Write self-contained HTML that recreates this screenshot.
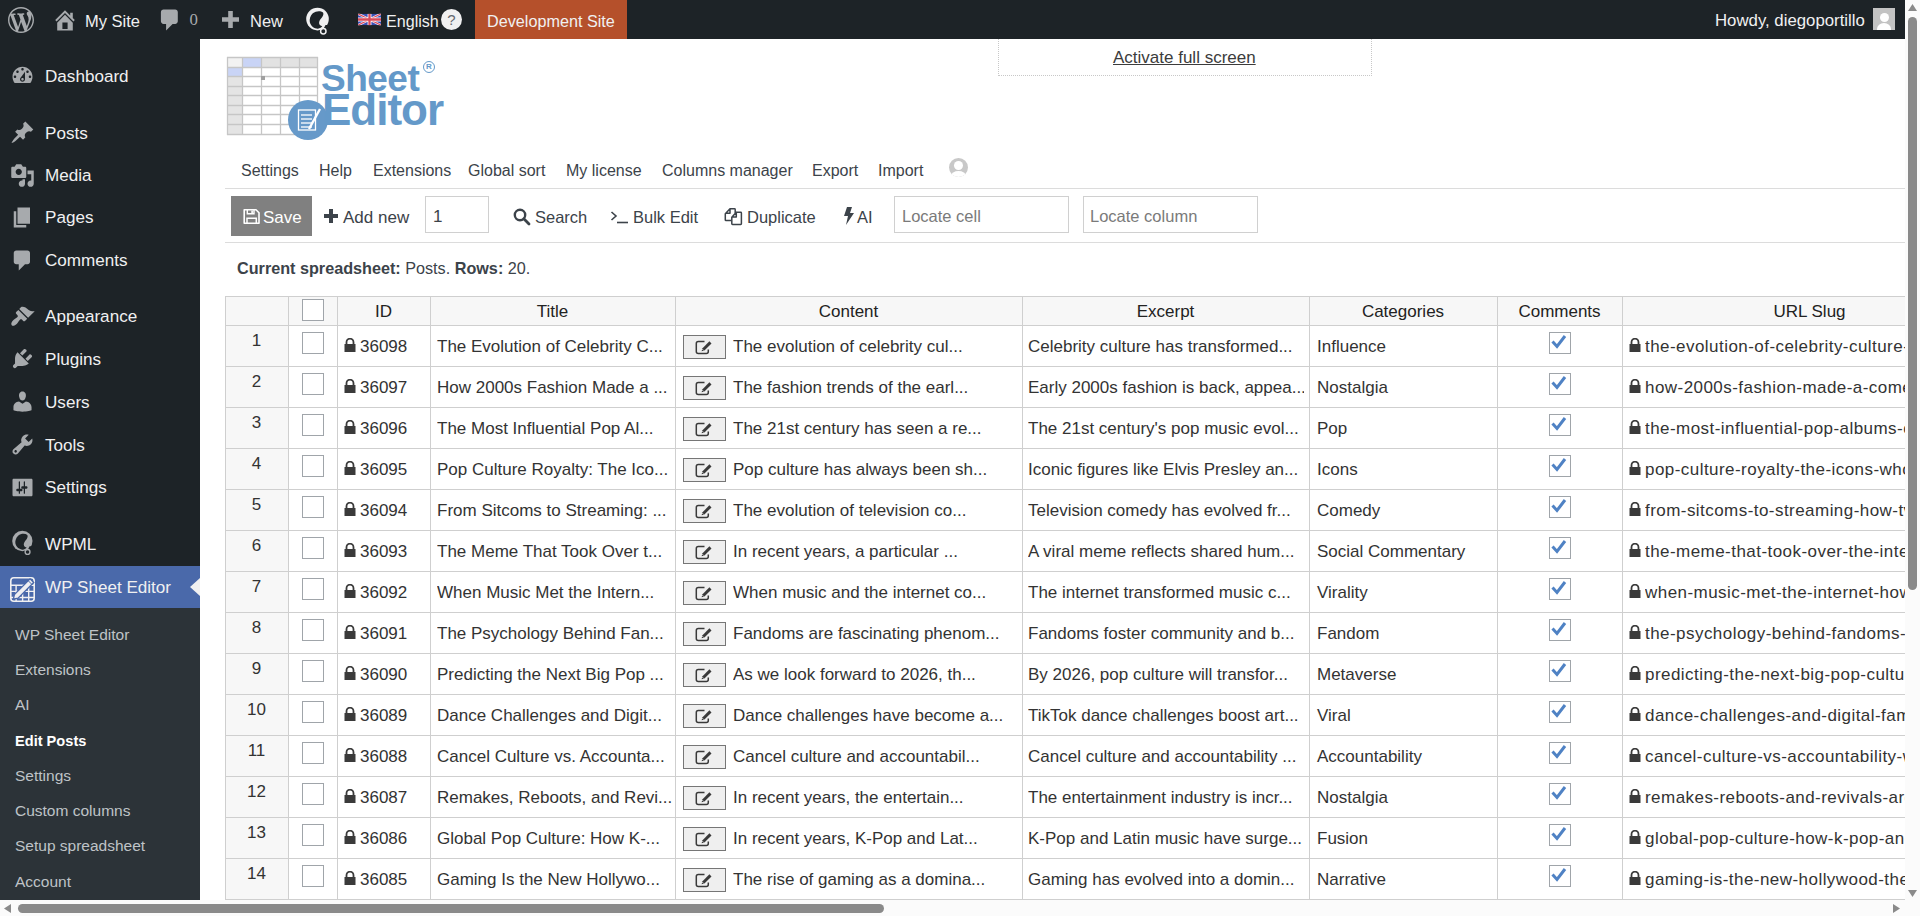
<!DOCTYPE html>
<html><head><meta charset="utf-8"><style>
html,body{margin:0;padding:0;width:1920px;height:916px;overflow:hidden;background:#fff;}
body{position:relative;font-family:"Liberation Sans", sans-serif;}
.f{font-family:"Liberation Sans", sans-serif;}
.t{position:absolute;white-space:nowrap;font-family:"Liberation Sans", sans-serif;}
</style></head><body>
<div style="position:absolute;left:0px;top:0px;width:1905px;height:39px;background:#1d2327"></div>
<svg style="position:absolute;left:8.3px;top:6.5px" width="26" height="26" viewBox="0 0 20 20"><path fill="#a7aaad" d="M20 10c0-5.51-4.49-10-10-10C4.48 0 0 4.49 0 10c0 5.52 4.48 10 10 10 5.51 0 10-4.48 10-10zM7.78 15.37L4.37 6.22c.55-.02 1.17-.08 1.17-.08.5-.06.44-1.13-.06-1.11 0 0-1.45.11-2.37.11-.18 0-.37 0-.58-.01C4.12 2.69 6.87 1.11 10 1.11c2.33 0 4.45.87 6.05 2.34-.68-.11-1.65.39-1.65 1.58 0 .74.45 1.36.9 2.1.35.61.55 1.36.55 2.46 0 1.49-1.4 5-1.4 5l-3.03-8.37c.54-.02.82-.17.82-.17.5-.05.44-1.25-.06-1.22 0 0-1.44.12-2.38.12-.87 0-2.33-.12-2.33-.12-.5-.03-.56 1.2-.06 1.22l.92.08 1.26 3.41zM17.41 10c.24-.64.74-1.87.43-4.25.7 1.29 1.05 2.71 1.05 4.25 0 3.29-1.73 6.24-4.4 7.78.97-2.59 1.94-5.2 2.92-7.78zM6.1 18.09C3.12 16.65 1.11 13.53 1.11 10c0-1.3.23-2.48.72-3.59 1.42 3.89 2.84 7.79 4.27 11.68zm4.03-6.63l2.58 6.98c-.86.29-1.76.45-2.71.45-.79 0-1.57-.11-2.29-.33.81-2.38 1.62-4.74 2.42-7.1z"/></svg>
<svg style="position:absolute;left:52px;top:7px" width="26" height="26" viewBox="0 0 20 20"><path fill="#a7aaad" d="M16 8.5l1.53 1.53-1.06 1.06L10 4.62l-6.47 6.47-1.06-1.06L10 2.5l4 4v-2h2v4zm-6-2.46l6 5.99V18H4v-5.97zM12 17v-5H8v5h4z"/></svg>
<div class="t" style="left:85px;top:13.03px;font-size:16.5px;line-height:16.5px;font-weight:400;color:#f0f0f1;">My Site</div>
<svg style="position:absolute;left:156.8px;top:7.3px" width="26" height="26" viewBox="0 0 20 20"><path fill="#a7aaad" d="M5 2h9c1.1 0 2 .9 2 2v7c0 1.1-.9 2-2 2h-2l-5 5v-5H5c-1.1 0-2-.9-2-2V4c0-1.1.9-2 2-2z"/></svg>
<div class="t" style="left:189.5px;top:12.08px;font-size:16.8px;line-height:16.8px;font-weight:400;color:#a7aaad;font-family:'Liberation Serif',serif">0</div>
<svg style="position:absolute;left:222px;top:11px" width="17" height="17" viewBox="0 0 17 17"><path fill="#a7aaad" d="M6.2 0H10.8V6.2H17V10.8H10.8V17H6.2V10.8H0V6.2H6.2Z"/></svg>
<div class="t" style="left:250px;top:13.03px;font-size:16.5px;line-height:16.5px;font-weight:400;color:#f0f0f1;">New</div>
<svg style="position:absolute;left:306px;top:7.7px;overflow:visible" width="24.0" height="27.0" viewBox="0 0 24 27"><circle cx="11.5" cy="11.1" r="11.3" fill="#f0f0f1"/><path fill="#1d2327" d="M17.1 4.4 C14.5 2.5 10 2.7 6.8 5.2 C4.2 7.6 3.3 11.5 3.8 14 C4.7 18.2 8.5 20.8 12 20.7 C13.5 20.3 15 20 16.3 18.3 C13.5 17.8 12.6 15.5 13.3 13.5 C13.8 11.8 15.3 10.5 16.4 8.8 C17.5 7 17.6 5.5 17.1 4.65Z"/><path fill="#1d2327" d="M19.5 17 L23.5 17 L23.5 22 L17 22Z"/><circle cx="17.3" cy="23.3" r="2.7" fill="none" stroke="#f0f0f1" stroke-width="1.5"/></svg>
<svg style="position:absolute;left:358px;top:12px" width="23" height="15" viewBox="0 0 60 30"><clipPath id="fc"><path d="M0 0v30h60V0z"/></clipPath><g clip-path="url(#fc)"><path d="M0 0v30h60V0z" fill="#3a4fb4"/><path d="M0 0l60 30m0-30L0 30" stroke="#fff" stroke-width="6"/><path d="M0 0l60 30m0-30L0 30" stroke="#d94a5a" stroke-width="3"/><path d="M30 0v30M0 15h60" stroke="#fff" stroke-width="10"/><path d="M30 0v30M0 15h60" stroke="#d94a5a" stroke-width="6"/></g></svg>
<div class="t" style="left:386px;top:13.37px;font-size:16.1px;line-height:16.1px;font-weight:400;color:#f0f0f1;">English</div>
<div style="position:absolute;left:441px;top:9px;width:21px;height:21px;border-radius:50%;background:#f0f0f1;color:#646970;font-size:15px;line-height:21px;font-weight:400;text-align:center" class="f">?</div>
<div style="position:absolute;left:475px;top:0px;width:152px;height:39px;background:#b5502b"></div>
<div class="t" style="left:487px;top:13.29px;font-size:16.2px;line-height:16.2px;font-weight:400;color:#f0f0f1;">Development Site</div>
<div class="t" style="left:1715px;top:12.78px;font-size:16.8px;line-height:16.8px;font-weight:400;color:#f0f0f1;">Howdy, diegoportillo</div>
<div style="position:absolute;left:1873px;top:8px;width:22px;height:22px;background:#c3c3c3;overflow:hidden"><div style="position:absolute;left:7px;top:5px;width:9px;height:9px;border-radius:50%;background:#fff"></div><div style="position:absolute;left:4px;top:15px;width:14px;height:12px;border-radius:50% 50% 0 0;background:#fff"></div></div>
<div style="position:absolute;left:0px;top:39px;width:200px;height:861px;background:#1d2327"></div>
<div style="position:absolute;left:0px;top:608px;width:200px;height:292px;background:#2c3338"></div>
<div style="position:absolute;left:0px;top:566px;width:200px;height:42px;background:#4a69aa"></div>
<svg style="position:absolute;left:190px;top:578px" width="10" height="18" viewBox="0 0 10 18"><path d="M10 0 L0 9 L10 18Z" fill="#f0f0f1"/></svg>
<div class="t" style="left:45px;top:67.52px;font-size:17.1px;line-height:17.1px;font-weight:400;color:#f0f0f1;">Dashboard</div>
<div class="t" style="left:45px;top:124.52px;font-size:17.1px;line-height:17.1px;font-weight:400;color:#f0f0f1;">Posts</div>
<div class="t" style="left:45px;top:167.02px;font-size:17.1px;line-height:17.1px;font-weight:400;color:#f0f0f1;">Media</div>
<div class="t" style="left:45px;top:209.02px;font-size:17.1px;line-height:17.1px;font-weight:400;color:#f0f0f1;">Pages</div>
<div class="t" style="left:45px;top:252.02px;font-size:17.1px;line-height:17.1px;font-weight:400;color:#f0f0f1;">Comments</div>
<div class="t" style="left:45px;top:308.02px;font-size:17.1px;line-height:17.1px;font-weight:400;color:#f0f0f1;">Appearance</div>
<div class="t" style="left:45px;top:350.82px;font-size:17.1px;line-height:17.1px;font-weight:400;color:#f0f0f1;">Plugins</div>
<div class="t" style="left:45px;top:393.82px;font-size:17.1px;line-height:17.1px;font-weight:400;color:#f0f0f1;">Users</div>
<div class="t" style="left:45px;top:436.52px;font-size:17.1px;line-height:17.1px;font-weight:400;color:#f0f0f1;">Tools</div>
<div class="t" style="left:45px;top:479.32px;font-size:17.1px;line-height:17.1px;font-weight:400;color:#f0f0f1;">Settings</div>
<div class="t" style="left:45px;top:536.32px;font-size:17.1px;line-height:17.1px;font-weight:400;color:#f0f0f1;">WPML</div>
<div class="t" style="left:45px;top:579.02px;font-size:17.1px;line-height:17.1px;font-weight:400;color:#f0f0f1;">WP Sheet Editor</div>
<svg style="position:absolute;left:9.5px;top:63.0px" width="25" height="25" viewBox="0 0 20 20"><path fill="#a7aaad" fill-rule="evenodd" d="M3.76 16h12.48c1.1-1.37 1.76-3.11 1.76-5 0-4.42-3.58-8-8-8s-8 3.58-8 8c0 1.89.66 3.63 1.76 5zM10 4c.55 0 1 .45 1 1s-.45 1-1 1-1-.45-1-1 .45-1 1-1zM6 6c.55 0 1 .45 1 1s-.45 1-1 1-1-.45-1-1 .45-1 1-1zm8 0c.55 0 1 .45 1 1s-.45 1-1 1-1-.45-1-1 .45-1 1-1zm-5.37 5.55L12 7v6c0 1.1-.9 2-2 2s-2-.9-2-2c0-.57.24-1.08.63-1.45zM4 10c.55 0 1 .45 1 1s-.45 1-1 1-1-.45-1-1 .45-1 1-1zm12 0c.55 0 1 .45 1 1s-.45 1-1 1-1-.45-1-1 .45-1 1-1zm-5 3c0-.55-.45-1-1-1s-1 .45-1 1 .45 1 1 1 1-.45 1-1z"/></svg>
<svg style="position:absolute;left:9.5px;top:120.0px" width="25" height="25" viewBox="0 0 20 20"><path fill="#a7aaad" fill-rule="evenodd" d="M10.44 3.02l1.82-1.82 6.36 6.35-1.83 1.82c-1.05-.68-2.48-.57-3.41.36l-.75.75c-.92.93-1.04 2.35-.35 3.41l-1.830 1.82-2.41-2.41-2.8 2.79c-.42.42-3.38 2.71-3.8 2.29s1.86-3.39 2.28-3.810l2.79-2.79L4.1 9.36l1.83-1.82c1.05.69 2.48.57 3.4-.36l.75-.75c.93-.92 1.05-2.35.36-3.41z"/></svg>
<svg style="position:absolute;left:9.5px;top:162.5px" width="25" height="25" viewBox="0 0 20 20"><path fill="#a7aaad" fill-rule="evenodd" d="M13 11V4c0-.55-.45-1-1-1h-1.67L9 1H5L3.67 3H2c-.55 0-1 .45-1 1v7c0 .55.45 1 1 1h10c.55 0 1-.45 1-1zM7 4.5c1.38 0 2.5 1.12 2.5 2.5S8.38 9.5 7 9.5 4.5 8.38 4.5 7 5.62 4.5 7 4.5zM14 6h5v10.5c0 1.38-1.12 2.5-2.5 2.5S14 17.88 14 16.5s1.12-2.5 2.5-2.5c.17 0 .34.02.5.05V9h-3V6zm-4 8.05V13h2v3.5c0 1.38-1.12 2.5-2.5 2.5S7 17.88 7 16.5 8.12 14 9.5 14c.17 0 .34.02.5.05z"/></svg>
<svg style="position:absolute;left:9.5px;top:204.5px" width="25" height="25" viewBox="0 0 20 20"><path fill="#a7aaad" fill-rule="evenodd" d="M6 15V2h10v13H6zm-1 1h8v2H3V5h2v11z"/></svg>
<svg style="position:absolute;left:9.5px;top:247.5px" width="25" height="25" viewBox="0 0 20 20"><path fill="#a7aaad" fill-rule="evenodd" d="M5 2h9c1.1 0 2 .9 2 2v7c0 1.1-.9 2-2 2h-2l-5 5v-5H5c-1.1 0-2-.9-2-2V4c0-1.1.9-2 2-2z"/></svg>
<svg style="position:absolute;left:9.5px;top:303.5px" width="25" height="25" viewBox="0 0 20 20"><path fill="#a7aaad" fill-rule="evenodd" d="M14.48 11.06L7.41 3.99l1.5-1.5c.5-.56 2.3-.47 3.51.32 1.21.8 1.43 1.28 2.91 2.1 1.18.64 2.45 1.26 4.45.85zm-.71.71L6.7 4.7 4.93 6.47c-.39.39-.39 1.02 0 1.41l1.06 1.06c.39.39.39 1.03 0 1.42-.6.6-1.430 1.11-2.21 1.69-.35.26-.7.53-1.01.84C1.43 14.23.4 16.08 1.4 17.07c.99 1 2.84-.03 4.18-1.36.31-.31.58-.66.85-1.02.57-.78 1.08-1.61 1.69-2.21.39-.39 1.02-.39 1.41 0l1.06 1.06c.39.39 1.02.39 1.41 0z"/></svg>
<svg style="position:absolute;left:9.5px;top:346.3px" width="25" height="25" viewBox="0 0 20 20"><path fill="#a7aaad" fill-rule="evenodd" d="M13.11 4.36L9.87 7.6 8 5.73l3.24-3.24c.35-.34 1.05-.2 1.56.32.52.51.66 1.21.31 1.55zm-8 1.77l.91-1.12 9.01 9.01-1.19.84c-.71.71-2.63 1.16-3.82 1.16H6.14L4.9 17.26c-.59.59-1.54.59-2.12 0-.59-.58-.59-1.53 0-2.12l1.24-1.24v-3.88c0-1.13.4-3.19 1.09-3.89zm7.26 3.970l3.24-3.24c.34-.35 1.04-.21 1.55.31.52.51.66 1.21.31 1.55l-3.24 3.25z"/></svg>
<svg style="position:absolute;left:9.5px;top:389.3px" width="25" height="25" viewBox="0 0 20 20"><path fill="#a7aaad" fill-rule="evenodd" d="M10 9.25c-2.27 0-2.73-3.44-2.73-3.44C7 4.02 7.82 2 9.97 2c2.16 0 2.98 2.02 2.71 3.81 0 0-.41 3.44-2.68 3.44zm0 2.57L12.72 10c2.39 0 4.52 2.33 4.52 4.53v2.49s-3.65 1.13-7.24 1.13c-3.65 0-7.24-1.130-7.24-1.13v-2.49c0-2.25 1.94-4.48 4.47-4.48z"/></svg>
<svg style="position:absolute;left:9.5px;top:432.0px" width="25" height="25" viewBox="0 0 20 20"><path fill="#a7aaad" fill-rule="evenodd" d="M16.68 9.77c-1.34 1.34-3.3 1.67-4.95.99l-5.41 6.52c-.99.99-2.59.99-3.58 0s-.99-2.59 0-3.57l6.52-5.42c-.68-1.65-.35-3.61.99-4.95 1.28-1.28 3.12-1.62 4.72-1.06l-2.89 2.89 2.82 2.82 2.86-2.87c.53 1.58.18 3.39-1.08 4.65zM3.81 16.21c.4.39 1.04.39 1.430 0 .4-.4.4-1.04 0-1.43-.39-.4-1.03-.4-1.43 0-.39.39-.39 1.03 0 1.43z"/></svg>
<svg style="position:absolute;left:9.5px;top:474.8px" width="25" height="25" viewBox="0 0 20 20"><path fill="#a7aaad" fill-rule="evenodd" d="M18 16V4c0-.55-.45-1-1-1H3c-.55 0-1 .45-1 1v12c0 .55.45 1 1 1h14c.55 0 1-.45 1-1zM8 11h1c.55 0 1 .45 1 1s-.45 1-1 1H8v1.5c0 .28-.22.5-.5.5s-.5-.22-.5-.5V13H6c-.55 0-1-.45-1-1s.45-1 1-1h1V5.5c0-.28.22-.5.5-.5s.5.22.5.5V11zm5-2h-1V5.5c0-.28-.22-.5-.5-.5s-.5.22-.5.5V9h-1c-.55 0-1 .45-1 1s.45 1 1 1h1v3.5c0 .28.22.5.5.5s.5-.22.5-.5V11h1c.55 0 1-.45 1-1s-.45-1-1-1z"/></svg>
<svg style="position:absolute;left:12px;top:531px;overflow:visible" width="21.6" height="24.3" viewBox="0 0 24 27"><circle cx="11.5" cy="11.1" r="11.3" fill="#a7aaad"/><path fill="#1d2327" d="M17.1 4.4 C14.5 2.5 10 2.7 6.8 5.2 C4.2 7.6 3.3 11.5 3.8 14 C4.7 18.2 8.5 20.8 12 20.7 C13.5 20.3 15 20 16.3 18.3 C13.5 17.8 12.6 15.5 13.3 13.5 C13.8 11.8 15.3 10.5 16.4 8.8 C17.5 7 17.6 5.5 17.1 4.65Z"/><path fill="#1d2327" d="M19.5 17 L23.5 17 L23.5 22 L17 22Z"/><circle cx="17.3" cy="23.3" r="2.7" fill="none" stroke="#a7aaad" stroke-width="1.5"/></svg>
<svg style="position:absolute;left:10px;top:577px" width="25" height="25" viewBox="0 0 25 25"><rect x="0.8" y="0.8" width="23.4" height="23.4" rx="3" fill="none" stroke="#f0f0f1" stroke-width="1.6"/><g stroke="#f0f0f1" stroke-width="1.4" fill="none"><path d="M1 8.3H24M1 14.4H24M1 20.5H24M6.1 8.3V24M12.6 8.3V24M18.7 8.3V24"/></g><path d="M3.4 22.2 L8.07 21.21 L23.74 5.54 L20.06 1.86 L4.39 17.53Z" fill="#f0f0f1" stroke="#4a69aa" stroke-width="1.3"/><path d="M18.2 3.7 L21.9 7.4" stroke="#4a69aa" stroke-width="1"/></svg>
<div class="t" style="left:15px;top:626.68px;font-size:15.5px;line-height:15.5px;font-weight:400;color:#bfc3c7;">WP Sheet Editor</div>
<div class="t" style="left:15px;top:661.98px;font-size:15.5px;line-height:15.5px;font-weight:400;color:#bfc3c7;">Extensions</div>
<div class="t" style="left:15px;top:697.28px;font-size:15.5px;line-height:15.5px;font-weight:400;color:#bfc3c7;">AI</div>
<div class="t" style="left:15px;top:734.14px;font-size:14.6px;line-height:14.6px;font-weight:700;color:#ffffff;">Edit Posts</div>
<div class="t" style="left:15px;top:767.88px;font-size:15.5px;line-height:15.5px;font-weight:400;color:#bfc3c7;">Settings</div>
<div class="t" style="left:15px;top:803.18px;font-size:15.5px;line-height:15.5px;font-weight:400;color:#bfc3c7;">Custom columns</div>
<div class="t" style="left:15px;top:838.48px;font-size:15.5px;line-height:15.5px;font-weight:400;color:#bfc3c7;">Setup spreadsheet</div>
<div class="t" style="left:15px;top:873.78px;font-size:15.5px;line-height:15.5px;font-weight:400;color:#bfc3c7;">Account</div>
<div style="position:absolute;left:1905px;top:0px;width:15px;height:916px;background:#fbfbfb"></div>
<div style="position:absolute;left:0px;top:900px;width:1905px;height:16px;background:#fbfbfb"></div>
<div style="position:absolute;left:1908px;top:17px;width:9px;height:573px;background:#8a8a8a;border-radius:5px"></div>
<div style="position:absolute;left:18px;top:904px;width:866px;height:9px;background:#8a8a8a;border-radius:5px"></div>
<svg style="position:absolute;left:1907px;top:3px" width="11" height="9" viewBox="0 0 11 9"><path d="M5.5 1 L10 8 H1Z" fill="#8a8a8a"/></svg>
<svg style="position:absolute;left:1907px;top:889px" width="11" height="9" viewBox="0 0 11 9"><path d="M5.5 8 L10 1 H1Z" fill="#8a8a8a"/></svg>
<svg style="position:absolute;left:3px;top:903px" width="9" height="11" viewBox="0 0 9 11"><path d="M1 5.5 L8 1 V10Z" fill="#8a8a8a"/></svg>
<svg style="position:absolute;left:1892px;top:903px" width="9" height="11" viewBox="0 0 9 11"><path d="M8 5.5 L1 1 V10Z" fill="#8a8a8a"/></svg>
<div style="position:absolute;left:998px;top:39px;width:374px;height:37px;border:1px dotted #c8c8c8;border-top:none;box-sizing:border-box"></div>
<div class="t" style="left:1113px;top:49.41px;font-size:17px;line-height:17px;font-weight:400;color:#3c3c3c;"><u>Activate full screen</u></div>
<div style="position:absolute;left:227px;top:57px;width:91px;height:77px;background:#fff"></div>
<div style="position:absolute;left:227px;top:57px;width:91px;height:10px;background:#e2e2e2"></div>
<div style="position:absolute;left:227px;top:67px;width:16px;height:67px;background:#e4e4e4"></div>
<div style="position:absolute;left:227px;top:57px;width:16px;height:10px;background:#f2f2f2"></div>
<div style="position:absolute;left:243px;top:57px;width:18px;height:10px;background:#c9d4f6"></div>
<div style="position:absolute;left:227px;top:67px;width:16px;height:9px;background:#c9d4f6"></div>
<svg style="position:absolute;left:0;top:0" width="460" height="150"><line x1="227.5" y1="57" x2="227.5" y2="135" stroke="#c6c6c6" stroke-width="1.3"/><line x1="242.5" y1="57" x2="242.5" y2="135" stroke="#c6c6c6" stroke-width="1.3"/><line x1="261.5" y1="57" x2="261.5" y2="135" stroke="#c6c6c6" stroke-width="1.3"/><line x1="280.5" y1="57" x2="280.5" y2="135" stroke="#c6c6c6" stroke-width="1.3"/><line x1="299.5" y1="57" x2="299.5" y2="135" stroke="#c6c6c6" stroke-width="1.3"/><line x1="317.5" y1="57" x2="317.5" y2="135" stroke="#c6c6c6" stroke-width="1.3"/><line x1="227" y1="57.5" x2="318" y2="57.5" stroke="#c6c6c6" stroke-width="1.3"/><line x1="227" y1="67.5" x2="318" y2="67.5" stroke="#c6c6c6" stroke-width="1.3"/><line x1="227" y1="76.5" x2="318" y2="76.5" stroke="#c6c6c6" stroke-width="1.3"/><line x1="227" y1="86.5" x2="318" y2="86.5" stroke="#c6c6c6" stroke-width="1.3"/><line x1="227" y1="95.5" x2="318" y2="95.5" stroke="#c6c6c6" stroke-width="1.3"/><line x1="227" y1="105.5" x2="318" y2="105.5" stroke="#c6c6c6" stroke-width="1.3"/><line x1="227" y1="114.5" x2="318" y2="114.5" stroke="#c6c6c6" stroke-width="1.3"/><line x1="227" y1="124.5" x2="318" y2="124.5" stroke="#c6c6c6" stroke-width="1.3"/><line x1="227" y1="134.5" x2="318" y2="134.5" stroke="#c6c6c6" stroke-width="1.3"/><rect x="261" y="76" width="4" height="4" fill="#a0a0a0"/><circle cx="308" cy="120" r="20" fill="#6699c9"/><g fill="none" stroke="#fff" stroke-width="1.3"><rect x="298.5" y="110" width="17" height="20"/><line x1="301" y1="115" x2="312" y2="115"/><line x1="301" y1="119" x2="312" y2="119"/><line x1="301" y1="123" x2="312" y2="123"/><line x1="301" y1="127" x2="312" y2="127"/></g><path d="M309 129 L320 109" stroke="#fff" stroke-width="2.4"/></svg>
<div class="t" style="left:321px;top:59.68px;font-size:37px;line-height:37px;font-weight:700;color:#6499c9;letter-spacing:-0.5px">Sheet</div>
<div class="t" style="left:322px;top:88.35px;font-size:44px;line-height:44px;font-weight:700;color:#6499c9;letter-spacing:-1px">Editor</div>
<div style="position:absolute;left:423px;top:61px;width:12px;height:12px;border:1.2px solid #6499c9;border-radius:50%;box-sizing:border-box;font-weight:700;font-size:8px;line-height:10px;color:#6499c9;text-align:center" class="f">R</div>
<div class="t" style="left:241px;top:162.76px;font-size:16px;line-height:16px;font-weight:400;color:#3c434a;">Settings</div>
<div class="t" style="left:319px;top:162.76px;font-size:16px;line-height:16px;font-weight:400;color:#3c434a;">Help</div>
<div class="t" style="left:373px;top:162.76px;font-size:16px;line-height:16px;font-weight:400;color:#3c434a;">Extensions</div>
<div class="t" style="left:468px;top:162.76px;font-size:16px;line-height:16px;font-weight:400;color:#3c434a;">Global sort</div>
<div class="t" style="left:566px;top:162.76px;font-size:16px;line-height:16px;font-weight:400;color:#3c434a;">My license</div>
<div class="t" style="left:662px;top:162.76px;font-size:16px;line-height:16px;font-weight:400;color:#3c434a;">Columns manager</div>
<div class="t" style="left:812px;top:162.76px;font-size:16px;line-height:16px;font-weight:400;color:#3c434a;">Export</div>
<div class="t" style="left:878px;top:162.76px;font-size:16px;line-height:16px;font-weight:400;color:#3c434a;">Import</div>
<div style="position:absolute;left:949px;top:158px;width:19px;height:19px;border-radius:50%;background:#c8c8c8;overflow:hidden"><div style="position:absolute;left:5px;top:3px;width:9px;height:9px;border-radius:50%;background:#fff"></div><div style="position:absolute;left:2px;top:13px;width:15px;height:10px;border-radius:50% 50% 0 0;background:#fff"></div></div>
<div style="position:absolute;left:225px;top:188px;width:1680px;height:1px;background:#dcdcdc"></div>
<div style="position:absolute;left:225px;top:242px;width:1680px;height:1px;background:#dcdcdc"></div>
<div style="position:absolute;left:231px;top:196px;width:81px;height:40px;background:#808080"></div>
<svg style="position:absolute;left:236px;top:200px" width="30" height="30" viewBox="236 200 30 30"><path d="M244.2 209.7 H256 L259 212.7 V223.3 H244.2Z" fill="none" stroke="#fff" stroke-width="1.6" stroke-linejoin="round"/><path d="M247.3 209.7 V213.8 H254 V209.7" fill="none" stroke="#fff" stroke-width="1.4"/><rect x="251.3" y="210.5" width="1.6" height="2.5" fill="#fff"/><path d="M247 223.3 V218.2 H256.3 V223.3" fill="none" stroke="#fff" stroke-width="1.5"/></svg>
<div class="t" style="left:263px;top:208.61px;font-size:17px;line-height:17px;font-weight:400;color:#ffffff;">Save</div>
<svg style="position:absolute;left:324px;top:209px" width="14" height="14" viewBox="0 0 14 14"><path d="M5 0H9V5H14V9H9V14H5V9H0V5H5Z" fill="#3c434a"/></svg>
<div class="t" style="left:343px;top:208.61px;font-size:17px;line-height:17px;font-weight:400;color:#3c434a;">Add new</div>
<div style="position:absolute;left:425px;top:196px;width:64px;height:37px;border:1px solid #d0d0d0;box-sizing:border-box;background:#fff"></div>
<div class="t" style="left:433px;top:207.61px;font-size:17px;line-height:17px;font-weight:400;color:#3c434a;">1</div>
<svg style="position:absolute;left:513px;top:208px" width="18" height="18" viewBox="0 0 18 18"><circle cx="7" cy="7" r="5.2" fill="none" stroke="#3c434a" stroke-width="2.4"/><path d="M10.8 10.8 L16 16" stroke="#3c434a" stroke-width="2.8" stroke-linecap="round"/></svg>
<div class="t" style="left:535px;top:209.03px;font-size:16.5px;line-height:16.5px;font-weight:400;color:#3c434a;">Search</div>
<svg style="position:absolute;left:610px;top:209px" width="19" height="15" viewBox="0 0 19 15"><path d="M1.5 3 L6 7 L1.5 11" fill="none" stroke="#3c434a" stroke-width="1.6"/><path d="M7 13.5 H18" stroke="#3c434a" stroke-width="1.6"/></svg>
<div class="t" style="left:633px;top:209.03px;font-size:16.5px;line-height:16.5px;font-weight:400;color:#3c434a;">Bulk Edit</div>
<svg style="position:absolute;left:718px;top:200px" width="30" height="30" viewBox="718 200 30 30"><path d="M730 208.7 H734.5 Q735.2 208.7 735.2 209.4 V213 M731.3 220.6 H726 Q725.3 220.6 725.3 219.9 V213.8 L730 208.7 V213.3 H725.3" fill="none" stroke="#3c434a" stroke-width="1.5" stroke-linejoin="round"/><path d="M736.3 212.2 H740.7 Q741.4 212.2 741.4 212.9 V223.7 Q741.4 224.4 740.7 224.4 H732.5 Q731.8 224.4 731.8 223.7 V217.3 L736.3 212.2 V216.9 H731.8" fill="none" stroke="#3c434a" stroke-width="1.5" stroke-linejoin="round"/></svg>
<div class="t" style="left:747px;top:209.03px;font-size:16.5px;line-height:16.5px;font-weight:400;color:#3c434a;">Duplicate</div>
<svg style="position:absolute;left:843px;top:207px" width="11" height="18" viewBox="0 0 11 18"><path d="M4 0 H9 L7 6 H11 L3 18 L5 9 H1Z" fill="#3c434a"/></svg>
<div class="t" style="left:857px;top:209.03px;font-size:16.5px;line-height:16.5px;font-weight:400;color:#3c434a;">AI</div>
<div style="position:absolute;left:894px;top:196px;width:175px;height:37px;border:1px solid #d0d0d0;box-sizing:border-box;background:#fff"></div>
<div class="t" style="left:902px;top:208.03px;font-size:16.5px;line-height:16.5px;font-weight:400;color:#7a7a7a;">Locate cell</div>
<div style="position:absolute;left:1083px;top:196px;width:175px;height:37px;border:1px solid #d0d0d0;box-sizing:border-box;background:#fff"></div>
<div class="t" style="left:1090px;top:208.03px;font-size:16.5px;line-height:16.5px;font-weight:400;color:#7a7a7a;">Locate column</div>
<div class="t" style="left:237px;top:259.79px;font-size:16.2px;line-height:16.2px;font-weight:400;color:#3c434a;"><b>Current spreadsheet:</b> Posts. <b>Rows:</b> 20.</div>
<div style="position:absolute;left:225px;top:296px;width:1680px;height:29px;background:#f7f7f7"></div>
<div style="position:absolute;left:225px;top:296px;width:63px;height:603px;background:#f7f7f7"></div>
<svg style="position:absolute;left:0;top:0" width="1905" height="900"><rect x="225" y="296" width="1" height="604" fill="#cfcfcf"/><rect x="288" y="296" width="1" height="604" fill="#cfcfcf"/><rect x="337" y="296" width="1" height="604" fill="#cfcfcf"/><rect x="430" y="296" width="1" height="604" fill="#cfcfcf"/><rect x="675" y="296" width="1" height="604" fill="#cfcfcf"/><rect x="1022" y="296" width="1" height="604" fill="#cfcfcf"/><rect x="1309" y="296" width="1" height="604" fill="#cfcfcf"/><rect x="1497" y="296" width="1" height="604" fill="#cfcfcf"/><rect x="1622" y="296" width="1" height="604" fill="#cfcfcf"/><rect x="225" y="296" width="1680" height="1" fill="#cfcfcf"/><rect x="225" y="325" width="1680" height="1" fill="#cfcfcf"/><rect x="225" y="366" width="1680" height="1" fill="#cfcfcf"/><rect x="225" y="407" width="1680" height="1" fill="#cfcfcf"/><rect x="225" y="448" width="1680" height="1" fill="#cfcfcf"/><rect x="225" y="489" width="1680" height="1" fill="#cfcfcf"/><rect x="225" y="530" width="1680" height="1" fill="#cfcfcf"/><rect x="225" y="571" width="1680" height="1" fill="#cfcfcf"/><rect x="225" y="612" width="1680" height="1" fill="#cfcfcf"/><rect x="225" y="653" width="1680" height="1" fill="#cfcfcf"/><rect x="225" y="694" width="1680" height="1" fill="#cfcfcf"/><rect x="225" y="735" width="1680" height="1" fill="#cfcfcf"/><rect x="225" y="776" width="1680" height="1" fill="#cfcfcf"/><rect x="225" y="817" width="1680" height="1" fill="#cfcfcf"/><rect x="225" y="858" width="1680" height="1" fill="#cfcfcf"/><rect x="225" y="899" width="1680" height="1" fill="#cfcfcf"/></svg>
<div class="t" style="left:337px;width:93px;text-align:center;top:302.61px;font-size:17px;line-height:17px;color:#222">ID</div>
<div class="t" style="left:430px;width:245px;text-align:center;top:302.61px;font-size:17px;line-height:17px;color:#222">Title</div>
<div class="t" style="left:675px;width:347px;text-align:center;top:302.61px;font-size:17px;line-height:17px;color:#222">Content</div>
<div class="t" style="left:1022px;width:287px;text-align:center;top:302.61px;font-size:17px;line-height:17px;color:#222">Excerpt</div>
<div class="t" style="left:1309px;width:188px;text-align:center;top:302.61px;font-size:17px;line-height:17px;color:#222">Categories</div>
<div class="t" style="left:1497px;width:125px;text-align:center;top:302.61px;font-size:17px;line-height:17px;color:#222">Comments</div>
<div class="t" style="left:1622px;width:375px;text-align:center;top:302.61px;font-size:17px;line-height:17px;color:#222">URL Slug</div>
<div style="position:absolute;left:302px;top:299px;width:22px;height:22px;border:1px solid #a0a5aa;box-sizing:border-box;background:#fff"></div>
<div class="t" style="left:225px;width:63px;text-align:center;top:331.61px;font-size:17px;line-height:17px;color:#333">1</div>
<div style="position:absolute;left:302px;top:332px;width:22px;height:22px;border:1px solid #a0a5aa;box-sizing:border-box;background:#fff"></div>
<svg style="position:absolute;left:344px;top:338px" width="12" height="14" viewBox="0 0 12 14"><path d="M2.5 6 V4.2 A3.5 3.5 0 0 1 9.5 4.2 V6" fill="none" stroke="#3a3a3a" stroke-width="1.8"/><rect x="0.5" y="6" width="11" height="8" fill="#3a3a3a"/></svg>
<div class="t" style="left:360px;top:337.61px;font-size:17px;line-height:17px;font-weight:400;color:#333;">36098</div>
<div class="t" style="left:437px;top:337.61px;font-size:17px;line-height:17px;font-weight:400;color:#333;width:237px;overflow:hidden">The Evolution of Celebrity C...</div>
<div style="position:absolute;left:683px;top:335px;width:43px;height:24px;background:#efefef;border:1px solid #767676;box-sizing:border-box"></div>
<svg style="position:absolute;left:690px;top:337px" width="30" height="22" viewBox="0 0 30 22"><path d="M14.5 4.6 H8.3 Q6.3 4.6 6.3 6.6 V14.6 Q6.3 16.6 8.3 16.6 H16.3 Q18.3 16.6 18.3 14.6 V12.6" fill="none" stroke="#3a3a3a" stroke-width="1.5"/><path d="M11.6 14.2 L12.3 11.4 L19.4 4.3 L21.5 6.4 L14.4 13.5Z" fill="#3a3a3a"/><path d="M12.4 12.2 L13.6 13.4" stroke="#efefef" stroke-width="1"/></svg><div class="t" style="left:733px;top:337.61px;font-size:17px;line-height:17px;font-weight:400;color:#333;width:284px;overflow:hidden">The evolution of celebrity cul...</div>
<div class="t" style="left:1028px;top:337.61px;font-size:17px;line-height:17px;font-weight:400;color:#333;width:276px;overflow:hidden">Celebrity culture has transformed...</div>
<div class="t" style="left:1317px;top:337.61px;font-size:17px;line-height:17px;font-weight:400;color:#333;">Influence</div>
<div style="position:absolute;left:1549px;top:332px;width:22px;height:22px;border:1px solid #a0a5aa;box-sizing:border-box;background:#fff"></div><svg style="position:absolute;left:1549px;top:332px" width="22" height="22" viewBox="0 0 22 22"><path d="M3.5 9.5 L8 14.5 L16 4" fill="none" stroke="#4f82c4" stroke-width="3"/></svg>
<svg style="position:absolute;left:1629px;top:338px" width="12" height="14" viewBox="0 0 12 14"><path d="M2.5 6 V4.2 A3.5 3.5 0 0 1 9.5 4.2 V6" fill="none" stroke="#3a3a3a" stroke-width="1.8"/><rect x="0.5" y="6" width="11" height="8" fill="#3a3a3a"/></svg>
<div class="t" style="left:1645px;width:260px;overflow:hidden;top:337.61px;font-size:17px;line-height:17px;color:#333;letter-spacing:0.45px">the-evolution-of-celebrity-culture-and-its-impact</div>
<div class="t" style="left:225px;width:63px;text-align:center;top:372.61px;font-size:17px;line-height:17px;color:#333">2</div>
<div style="position:absolute;left:302px;top:373px;width:22px;height:22px;border:1px solid #a0a5aa;box-sizing:border-box;background:#fff"></div>
<svg style="position:absolute;left:344px;top:379px" width="12" height="14" viewBox="0 0 12 14"><path d="M2.5 6 V4.2 A3.5 3.5 0 0 1 9.5 4.2 V6" fill="none" stroke="#3a3a3a" stroke-width="1.8"/><rect x="0.5" y="6" width="11" height="8" fill="#3a3a3a"/></svg>
<div class="t" style="left:360px;top:378.61px;font-size:17px;line-height:17px;font-weight:400;color:#333;">36097</div>
<div class="t" style="left:437px;top:378.61px;font-size:17px;line-height:17px;font-weight:400;color:#333;width:237px;overflow:hidden">How 2000s Fashion Made a ...</div>
<div style="position:absolute;left:683px;top:376px;width:43px;height:24px;background:#efefef;border:1px solid #767676;box-sizing:border-box"></div>
<svg style="position:absolute;left:690px;top:378px" width="30" height="22" viewBox="0 0 30 22"><path d="M14.5 4.6 H8.3 Q6.3 4.6 6.3 6.6 V14.6 Q6.3 16.6 8.3 16.6 H16.3 Q18.3 16.6 18.3 14.6 V12.6" fill="none" stroke="#3a3a3a" stroke-width="1.5"/><path d="M11.6 14.2 L12.3 11.4 L19.4 4.3 L21.5 6.4 L14.4 13.5Z" fill="#3a3a3a"/><path d="M12.4 12.2 L13.6 13.4" stroke="#efefef" stroke-width="1"/></svg><div class="t" style="left:733px;top:378.61px;font-size:17px;line-height:17px;font-weight:400;color:#333;width:284px;overflow:hidden">The fashion trends of the earl...</div>
<div class="t" style="left:1028px;top:378.61px;font-size:17px;line-height:17px;font-weight:400;color:#333;width:276px;overflow:hidden">Early 2000s fashion is back, appea...</div>
<div class="t" style="left:1317px;top:378.61px;font-size:17px;line-height:17px;font-weight:400;color:#333;">Nostalgia</div>
<div style="position:absolute;left:1549px;top:373px;width:22px;height:22px;border:1px solid #a0a5aa;box-sizing:border-box;background:#fff"></div><svg style="position:absolute;left:1549px;top:373px" width="22" height="22" viewBox="0 0 22 22"><path d="M3.5 9.5 L8 14.5 L16 4" fill="none" stroke="#4f82c4" stroke-width="3"/></svg>
<svg style="position:absolute;left:1629px;top:379px" width="12" height="14" viewBox="0 0 12 14"><path d="M2.5 6 V4.2 A3.5 3.5 0 0 1 9.5 4.2 V6" fill="none" stroke="#3a3a3a" stroke-width="1.8"/><rect x="0.5" y="6" width="11" height="8" fill="#3a3a3a"/></svg>
<div class="t" style="left:1645px;width:260px;overflow:hidden;top:378.61px;font-size:17px;line-height:17px;color:#333;letter-spacing:0.45px">how-2000s-fashion-made-a-comeback-in-2024</div>
<div class="t" style="left:225px;width:63px;text-align:center;top:413.61px;font-size:17px;line-height:17px;color:#333">3</div>
<div style="position:absolute;left:302px;top:414px;width:22px;height:22px;border:1px solid #a0a5aa;box-sizing:border-box;background:#fff"></div>
<svg style="position:absolute;left:344px;top:420px" width="12" height="14" viewBox="0 0 12 14"><path d="M2.5 6 V4.2 A3.5 3.5 0 0 1 9.5 4.2 V6" fill="none" stroke="#3a3a3a" stroke-width="1.8"/><rect x="0.5" y="6" width="11" height="8" fill="#3a3a3a"/></svg>
<div class="t" style="left:360px;top:419.61px;font-size:17px;line-height:17px;font-weight:400;color:#333;">36096</div>
<div class="t" style="left:437px;top:419.61px;font-size:17px;line-height:17px;font-weight:400;color:#333;width:237px;overflow:hidden">The Most Influential Pop Al...</div>
<div style="position:absolute;left:683px;top:417px;width:43px;height:24px;background:#efefef;border:1px solid #767676;box-sizing:border-box"></div>
<svg style="position:absolute;left:690px;top:419px" width="30" height="22" viewBox="0 0 30 22"><path d="M14.5 4.6 H8.3 Q6.3 4.6 6.3 6.6 V14.6 Q6.3 16.6 8.3 16.6 H16.3 Q18.3 16.6 18.3 14.6 V12.6" fill="none" stroke="#3a3a3a" stroke-width="1.5"/><path d="M11.6 14.2 L12.3 11.4 L19.4 4.3 L21.5 6.4 L14.4 13.5Z" fill="#3a3a3a"/><path d="M12.4 12.2 L13.6 13.4" stroke="#efefef" stroke-width="1"/></svg><div class="t" style="left:733px;top:419.61px;font-size:17px;line-height:17px;font-weight:400;color:#333;width:284px;overflow:hidden">The 21st century has seen a re...</div>
<div class="t" style="left:1028px;top:419.61px;font-size:17px;line-height:17px;font-weight:400;color:#333;width:276px;overflow:hidden">The 21st century's pop music evol...</div>
<div class="t" style="left:1317px;top:419.61px;font-size:17px;line-height:17px;font-weight:400;color:#333;">Pop</div>
<div style="position:absolute;left:1549px;top:414px;width:22px;height:22px;border:1px solid #a0a5aa;box-sizing:border-box;background:#fff"></div><svg style="position:absolute;left:1549px;top:414px" width="22" height="22" viewBox="0 0 22 22"><path d="M3.5 9.5 L8 14.5 L16 4" fill="none" stroke="#4f82c4" stroke-width="3"/></svg>
<svg style="position:absolute;left:1629px;top:420px" width="12" height="14" viewBox="0 0 12 14"><path d="M2.5 6 V4.2 A3.5 3.5 0 0 1 9.5 4.2 V6" fill="none" stroke="#3a3a3a" stroke-width="1.8"/><rect x="0.5" y="6" width="11" height="8" fill="#3a3a3a"/></svg>
<div class="t" style="left:1645px;width:260px;overflow:hidden;top:419.61px;font-size:17px;line-height:17px;color:#333;letter-spacing:0.45px">the-most-influential-pop-albums-of-the-21st-century</div>
<div class="t" style="left:225px;width:63px;text-align:center;top:454.61px;font-size:17px;line-height:17px;color:#333">4</div>
<div style="position:absolute;left:302px;top:455px;width:22px;height:22px;border:1px solid #a0a5aa;box-sizing:border-box;background:#fff"></div>
<svg style="position:absolute;left:344px;top:461px" width="12" height="14" viewBox="0 0 12 14"><path d="M2.5 6 V4.2 A3.5 3.5 0 0 1 9.5 4.2 V6" fill="none" stroke="#3a3a3a" stroke-width="1.8"/><rect x="0.5" y="6" width="11" height="8" fill="#3a3a3a"/></svg>
<div class="t" style="left:360px;top:460.61px;font-size:17px;line-height:17px;font-weight:400;color:#333;">36095</div>
<div class="t" style="left:437px;top:460.61px;font-size:17px;line-height:17px;font-weight:400;color:#333;width:237px;overflow:hidden">Pop Culture Royalty: The Ico...</div>
<div style="position:absolute;left:683px;top:458px;width:43px;height:24px;background:#efefef;border:1px solid #767676;box-sizing:border-box"></div>
<svg style="position:absolute;left:690px;top:460px" width="30" height="22" viewBox="0 0 30 22"><path d="M14.5 4.6 H8.3 Q6.3 4.6 6.3 6.6 V14.6 Q6.3 16.6 8.3 16.6 H16.3 Q18.3 16.6 18.3 14.6 V12.6" fill="none" stroke="#3a3a3a" stroke-width="1.5"/><path d="M11.6 14.2 L12.3 11.4 L19.4 4.3 L21.5 6.4 L14.4 13.5Z" fill="#3a3a3a"/><path d="M12.4 12.2 L13.6 13.4" stroke="#efefef" stroke-width="1"/></svg><div class="t" style="left:733px;top:460.61px;font-size:17px;line-height:17px;font-weight:400;color:#333;width:284px;overflow:hidden">Pop culture has always been sh...</div>
<div class="t" style="left:1028px;top:460.61px;font-size:17px;line-height:17px;font-weight:400;color:#333;width:276px;overflow:hidden">Iconic figures like Elvis Presley an...</div>
<div class="t" style="left:1317px;top:460.61px;font-size:17px;line-height:17px;font-weight:400;color:#333;">Icons</div>
<div style="position:absolute;left:1549px;top:455px;width:22px;height:22px;border:1px solid #a0a5aa;box-sizing:border-box;background:#fff"></div><svg style="position:absolute;left:1549px;top:455px" width="22" height="22" viewBox="0 0 22 22"><path d="M3.5 9.5 L8 14.5 L16 4" fill="none" stroke="#4f82c4" stroke-width="3"/></svg>
<svg style="position:absolute;left:1629px;top:461px" width="12" height="14" viewBox="0 0 12 14"><path d="M2.5 6 V4.2 A3.5 3.5 0 0 1 9.5 4.2 V6" fill="none" stroke="#3a3a3a" stroke-width="1.8"/><rect x="0.5" y="6" width="11" height="8" fill="#3a3a3a"/></svg>
<div class="t" style="left:1645px;width:260px;overflow:hidden;top:460.61px;font-size:17px;line-height:17px;color:#333;letter-spacing:0.45px">pop-culture-royalty-the-icons-who-shaped</div>
<div class="t" style="left:225px;width:63px;text-align:center;top:495.61px;font-size:17px;line-height:17px;color:#333">5</div>
<div style="position:absolute;left:302px;top:496px;width:22px;height:22px;border:1px solid #a0a5aa;box-sizing:border-box;background:#fff"></div>
<svg style="position:absolute;left:344px;top:502px" width="12" height="14" viewBox="0 0 12 14"><path d="M2.5 6 V4.2 A3.5 3.5 0 0 1 9.5 4.2 V6" fill="none" stroke="#3a3a3a" stroke-width="1.8"/><rect x="0.5" y="6" width="11" height="8" fill="#3a3a3a"/></svg>
<div class="t" style="left:360px;top:501.61px;font-size:17px;line-height:17px;font-weight:400;color:#333;">36094</div>
<div class="t" style="left:437px;top:501.61px;font-size:17px;line-height:17px;font-weight:400;color:#333;width:237px;overflow:hidden">From Sitcoms to Streaming: ...</div>
<div style="position:absolute;left:683px;top:499px;width:43px;height:24px;background:#efefef;border:1px solid #767676;box-sizing:border-box"></div>
<svg style="position:absolute;left:690px;top:501px" width="30" height="22" viewBox="0 0 30 22"><path d="M14.5 4.6 H8.3 Q6.3 4.6 6.3 6.6 V14.6 Q6.3 16.6 8.3 16.6 H16.3 Q18.3 16.6 18.3 14.6 V12.6" fill="none" stroke="#3a3a3a" stroke-width="1.5"/><path d="M11.6 14.2 L12.3 11.4 L19.4 4.3 L21.5 6.4 L14.4 13.5Z" fill="#3a3a3a"/><path d="M12.4 12.2 L13.6 13.4" stroke="#efefef" stroke-width="1"/></svg><div class="t" style="left:733px;top:501.61px;font-size:17px;line-height:17px;font-weight:400;color:#333;width:284px;overflow:hidden">The evolution of television co...</div>
<div class="t" style="left:1028px;top:501.61px;font-size:17px;line-height:17px;font-weight:400;color:#333;width:276px;overflow:hidden">Television comedy has evolved fr...</div>
<div class="t" style="left:1317px;top:501.61px;font-size:17px;line-height:17px;font-weight:400;color:#333;">Comedy</div>
<div style="position:absolute;left:1549px;top:496px;width:22px;height:22px;border:1px solid #a0a5aa;box-sizing:border-box;background:#fff"></div><svg style="position:absolute;left:1549px;top:496px" width="22" height="22" viewBox="0 0 22 22"><path d="M3.5 9.5 L8 14.5 L16 4" fill="none" stroke="#4f82c4" stroke-width="3"/></svg>
<svg style="position:absolute;left:1629px;top:502px" width="12" height="14" viewBox="0 0 12 14"><path d="M2.5 6 V4.2 A3.5 3.5 0 0 1 9.5 4.2 V6" fill="none" stroke="#3a3a3a" stroke-width="1.8"/><rect x="0.5" y="6" width="11" height="8" fill="#3a3a3a"/></svg>
<div class="t" style="left:1645px;width:260px;overflow:hidden;top:501.61px;font-size:17px;line-height:17px;color:#333;letter-spacing:0.45px">from-sitcoms-to-streaming-how-tv-comedy</div>
<div class="t" style="left:225px;width:63px;text-align:center;top:536.61px;font-size:17px;line-height:17px;color:#333">6</div>
<div style="position:absolute;left:302px;top:537px;width:22px;height:22px;border:1px solid #a0a5aa;box-sizing:border-box;background:#fff"></div>
<svg style="position:absolute;left:344px;top:543px" width="12" height="14" viewBox="0 0 12 14"><path d="M2.5 6 V4.2 A3.5 3.5 0 0 1 9.5 4.2 V6" fill="none" stroke="#3a3a3a" stroke-width="1.8"/><rect x="0.5" y="6" width="11" height="8" fill="#3a3a3a"/></svg>
<div class="t" style="left:360px;top:542.61px;font-size:17px;line-height:17px;font-weight:400;color:#333;">36093</div>
<div class="t" style="left:437px;top:542.61px;font-size:17px;line-height:17px;font-weight:400;color:#333;width:237px;overflow:hidden">The Meme That Took Over t...</div>
<div style="position:absolute;left:683px;top:540px;width:43px;height:24px;background:#efefef;border:1px solid #767676;box-sizing:border-box"></div>
<svg style="position:absolute;left:690px;top:542px" width="30" height="22" viewBox="0 0 30 22"><path d="M14.5 4.6 H8.3 Q6.3 4.6 6.3 6.6 V14.6 Q6.3 16.6 8.3 16.6 H16.3 Q18.3 16.6 18.3 14.6 V12.6" fill="none" stroke="#3a3a3a" stroke-width="1.5"/><path d="M11.6 14.2 L12.3 11.4 L19.4 4.3 L21.5 6.4 L14.4 13.5Z" fill="#3a3a3a"/><path d="M12.4 12.2 L13.6 13.4" stroke="#efefef" stroke-width="1"/></svg><div class="t" style="left:733px;top:542.61px;font-size:17px;line-height:17px;font-weight:400;color:#333;width:284px;overflow:hidden">In recent years, a particular ...</div>
<div class="t" style="left:1028px;top:542.61px;font-size:17px;line-height:17px;font-weight:400;color:#333;width:276px;overflow:hidden">A viral meme reflects shared hum...</div>
<div class="t" style="left:1317px;top:542.61px;font-size:17px;line-height:17px;font-weight:400;color:#333;">Social Commentary</div>
<div style="position:absolute;left:1549px;top:537px;width:22px;height:22px;border:1px solid #a0a5aa;box-sizing:border-box;background:#fff"></div><svg style="position:absolute;left:1549px;top:537px" width="22" height="22" viewBox="0 0 22 22"><path d="M3.5 9.5 L8 14.5 L16 4" fill="none" stroke="#4f82c4" stroke-width="3"/></svg>
<svg style="position:absolute;left:1629px;top:543px" width="12" height="14" viewBox="0 0 12 14"><path d="M2.5 6 V4.2 A3.5 3.5 0 0 1 9.5 4.2 V6" fill="none" stroke="#3a3a3a" stroke-width="1.8"/><rect x="0.5" y="6" width="11" height="8" fill="#3a3a3a"/></svg>
<div class="t" style="left:1645px;width:260px;overflow:hidden;top:542.61px;font-size:17px;line-height:17px;color:#333;letter-spacing:0.45px">the-meme-that-took-over-the-internet-in-2024</div>
<div class="t" style="left:225px;width:63px;text-align:center;top:577.61px;font-size:17px;line-height:17px;color:#333">7</div>
<div style="position:absolute;left:302px;top:578px;width:22px;height:22px;border:1px solid #a0a5aa;box-sizing:border-box;background:#fff"></div>
<svg style="position:absolute;left:344px;top:584px" width="12" height="14" viewBox="0 0 12 14"><path d="M2.5 6 V4.2 A3.5 3.5 0 0 1 9.5 4.2 V6" fill="none" stroke="#3a3a3a" stroke-width="1.8"/><rect x="0.5" y="6" width="11" height="8" fill="#3a3a3a"/></svg>
<div class="t" style="left:360px;top:583.61px;font-size:17px;line-height:17px;font-weight:400;color:#333;">36092</div>
<div class="t" style="left:437px;top:583.61px;font-size:17px;line-height:17px;font-weight:400;color:#333;width:237px;overflow:hidden">When Music Met the Intern...</div>
<div style="position:absolute;left:683px;top:581px;width:43px;height:24px;background:#efefef;border:1px solid #767676;box-sizing:border-box"></div>
<svg style="position:absolute;left:690px;top:583px" width="30" height="22" viewBox="0 0 30 22"><path d="M14.5 4.6 H8.3 Q6.3 4.6 6.3 6.6 V14.6 Q6.3 16.6 8.3 16.6 H16.3 Q18.3 16.6 18.3 14.6 V12.6" fill="none" stroke="#3a3a3a" stroke-width="1.5"/><path d="M11.6 14.2 L12.3 11.4 L19.4 4.3 L21.5 6.4 L14.4 13.5Z" fill="#3a3a3a"/><path d="M12.4 12.2 L13.6 13.4" stroke="#efefef" stroke-width="1"/></svg><div class="t" style="left:733px;top:583.61px;font-size:17px;line-height:17px;font-weight:400;color:#333;width:284px;overflow:hidden">When music and the internet co...</div>
<div class="t" style="left:1028px;top:583.61px;font-size:17px;line-height:17px;font-weight:400;color:#333;width:276px;overflow:hidden">The internet transformed music c...</div>
<div class="t" style="left:1317px;top:583.61px;font-size:17px;line-height:17px;font-weight:400;color:#333;">Virality</div>
<div style="position:absolute;left:1549px;top:578px;width:22px;height:22px;border:1px solid #a0a5aa;box-sizing:border-box;background:#fff"></div><svg style="position:absolute;left:1549px;top:578px" width="22" height="22" viewBox="0 0 22 22"><path d="M3.5 9.5 L8 14.5 L16 4" fill="none" stroke="#4f82c4" stroke-width="3"/></svg>
<svg style="position:absolute;left:1629px;top:584px" width="12" height="14" viewBox="0 0 12 14"><path d="M2.5 6 V4.2 A3.5 3.5 0 0 1 9.5 4.2 V6" fill="none" stroke="#3a3a3a" stroke-width="1.8"/><rect x="0.5" y="6" width="11" height="8" fill="#3a3a3a"/></svg>
<div class="t" style="left:1645px;width:260px;overflow:hidden;top:583.61px;font-size:17px;line-height:17px;color:#333;letter-spacing:0.45px">when-music-met-the-internet-how-viral-hits</div>
<div class="t" style="left:225px;width:63px;text-align:center;top:618.61px;font-size:17px;line-height:17px;color:#333">8</div>
<div style="position:absolute;left:302px;top:619px;width:22px;height:22px;border:1px solid #a0a5aa;box-sizing:border-box;background:#fff"></div>
<svg style="position:absolute;left:344px;top:625px" width="12" height="14" viewBox="0 0 12 14"><path d="M2.5 6 V4.2 A3.5 3.5 0 0 1 9.5 4.2 V6" fill="none" stroke="#3a3a3a" stroke-width="1.8"/><rect x="0.5" y="6" width="11" height="8" fill="#3a3a3a"/></svg>
<div class="t" style="left:360px;top:624.61px;font-size:17px;line-height:17px;font-weight:400;color:#333;">36091</div>
<div class="t" style="left:437px;top:624.61px;font-size:17px;line-height:17px;font-weight:400;color:#333;width:237px;overflow:hidden">The Psychology Behind Fan...</div>
<div style="position:absolute;left:683px;top:622px;width:43px;height:24px;background:#efefef;border:1px solid #767676;box-sizing:border-box"></div>
<svg style="position:absolute;left:690px;top:624px" width="30" height="22" viewBox="0 0 30 22"><path d="M14.5 4.6 H8.3 Q6.3 4.6 6.3 6.6 V14.6 Q6.3 16.6 8.3 16.6 H16.3 Q18.3 16.6 18.3 14.6 V12.6" fill="none" stroke="#3a3a3a" stroke-width="1.5"/><path d="M11.6 14.2 L12.3 11.4 L19.4 4.3 L21.5 6.4 L14.4 13.5Z" fill="#3a3a3a"/><path d="M12.4 12.2 L13.6 13.4" stroke="#efefef" stroke-width="1"/></svg><div class="t" style="left:733px;top:624.61px;font-size:17px;line-height:17px;font-weight:400;color:#333;width:284px;overflow:hidden">Fandoms are fascinating phenom...</div>
<div class="t" style="left:1028px;top:624.61px;font-size:17px;line-height:17px;font-weight:400;color:#333;width:276px;overflow:hidden">Fandoms foster community and b...</div>
<div class="t" style="left:1317px;top:624.61px;font-size:17px;line-height:17px;font-weight:400;color:#333;">Fandom</div>
<div style="position:absolute;left:1549px;top:619px;width:22px;height:22px;border:1px solid #a0a5aa;box-sizing:border-box;background:#fff"></div><svg style="position:absolute;left:1549px;top:619px" width="22" height="22" viewBox="0 0 22 22"><path d="M3.5 9.5 L8 14.5 L16 4" fill="none" stroke="#4f82c4" stroke-width="3"/></svg>
<svg style="position:absolute;left:1629px;top:625px" width="12" height="14" viewBox="0 0 12 14"><path d="M2.5 6 V4.2 A3.5 3.5 0 0 1 9.5 4.2 V6" fill="none" stroke="#3a3a3a" stroke-width="1.8"/><rect x="0.5" y="6" width="11" height="8" fill="#3a3a3a"/></svg>
<div class="t" style="left:1645px;width:260px;overflow:hidden;top:624.61px;font-size:17px;line-height:17px;color:#333;letter-spacing:0.45px">the-psychology-behind-fandoms-why-we-love</div>
<div class="t" style="left:225px;width:63px;text-align:center;top:659.61px;font-size:17px;line-height:17px;color:#333">9</div>
<div style="position:absolute;left:302px;top:660px;width:22px;height:22px;border:1px solid #a0a5aa;box-sizing:border-box;background:#fff"></div>
<svg style="position:absolute;left:344px;top:666px" width="12" height="14" viewBox="0 0 12 14"><path d="M2.5 6 V4.2 A3.5 3.5 0 0 1 9.5 4.2 V6" fill="none" stroke="#3a3a3a" stroke-width="1.8"/><rect x="0.5" y="6" width="11" height="8" fill="#3a3a3a"/></svg>
<div class="t" style="left:360px;top:665.61px;font-size:17px;line-height:17px;font-weight:400;color:#333;">36090</div>
<div class="t" style="left:437px;top:665.61px;font-size:17px;line-height:17px;font-weight:400;color:#333;width:237px;overflow:hidden">Predicting the Next Big Pop ...</div>
<div style="position:absolute;left:683px;top:663px;width:43px;height:24px;background:#efefef;border:1px solid #767676;box-sizing:border-box"></div>
<svg style="position:absolute;left:690px;top:665px" width="30" height="22" viewBox="0 0 30 22"><path d="M14.5 4.6 H8.3 Q6.3 4.6 6.3 6.6 V14.6 Q6.3 16.6 8.3 16.6 H16.3 Q18.3 16.6 18.3 14.6 V12.6" fill="none" stroke="#3a3a3a" stroke-width="1.5"/><path d="M11.6 14.2 L12.3 11.4 L19.4 4.3 L21.5 6.4 L14.4 13.5Z" fill="#3a3a3a"/><path d="M12.4 12.2 L13.6 13.4" stroke="#efefef" stroke-width="1"/></svg><div class="t" style="left:733px;top:665.61px;font-size:17px;line-height:17px;font-weight:400;color:#333;width:284px;overflow:hidden">As we look forward to 2026, th...</div>
<div class="t" style="left:1028px;top:665.61px;font-size:17px;line-height:17px;font-weight:400;color:#333;width:276px;overflow:hidden">By 2026, pop culture will transfor...</div>
<div class="t" style="left:1317px;top:665.61px;font-size:17px;line-height:17px;font-weight:400;color:#333;">Metaverse</div>
<div style="position:absolute;left:1549px;top:660px;width:22px;height:22px;border:1px solid #a0a5aa;box-sizing:border-box;background:#fff"></div><svg style="position:absolute;left:1549px;top:660px" width="22" height="22" viewBox="0 0 22 22"><path d="M3.5 9.5 L8 14.5 L16 4" fill="none" stroke="#4f82c4" stroke-width="3"/></svg>
<svg style="position:absolute;left:1629px;top:666px" width="12" height="14" viewBox="0 0 12 14"><path d="M2.5 6 V4.2 A3.5 3.5 0 0 1 9.5 4.2 V6" fill="none" stroke="#3a3a3a" stroke-width="1.8"/><rect x="0.5" y="6" width="11" height="8" fill="#3a3a3a"/></svg>
<div class="t" style="left:1645px;width:260px;overflow:hidden;top:665.61px;font-size:17px;line-height:17px;color:#333;letter-spacing:0.45px">predicting-the-next-big-pop-culture-trends</div>
<div class="t" style="left:225px;width:63px;text-align:center;top:700.61px;font-size:17px;line-height:17px;color:#333">10</div>
<div style="position:absolute;left:302px;top:701px;width:22px;height:22px;border:1px solid #a0a5aa;box-sizing:border-box;background:#fff"></div>
<svg style="position:absolute;left:344px;top:707px" width="12" height="14" viewBox="0 0 12 14"><path d="M2.5 6 V4.2 A3.5 3.5 0 0 1 9.5 4.2 V6" fill="none" stroke="#3a3a3a" stroke-width="1.8"/><rect x="0.5" y="6" width="11" height="8" fill="#3a3a3a"/></svg>
<div class="t" style="left:360px;top:706.61px;font-size:17px;line-height:17px;font-weight:400;color:#333;">36089</div>
<div class="t" style="left:437px;top:706.61px;font-size:17px;line-height:17px;font-weight:400;color:#333;width:237px;overflow:hidden">Dance Challenges and Digit...</div>
<div style="position:absolute;left:683px;top:704px;width:43px;height:24px;background:#efefef;border:1px solid #767676;box-sizing:border-box"></div>
<svg style="position:absolute;left:690px;top:706px" width="30" height="22" viewBox="0 0 30 22"><path d="M14.5 4.6 H8.3 Q6.3 4.6 6.3 6.6 V14.6 Q6.3 16.6 8.3 16.6 H16.3 Q18.3 16.6 18.3 14.6 V12.6" fill="none" stroke="#3a3a3a" stroke-width="1.5"/><path d="M11.6 14.2 L12.3 11.4 L19.4 4.3 L21.5 6.4 L14.4 13.5Z" fill="#3a3a3a"/><path d="M12.4 12.2 L13.6 13.4" stroke="#efefef" stroke-width="1"/></svg><div class="t" style="left:733px;top:706.61px;font-size:17px;line-height:17px;font-weight:400;color:#333;width:284px;overflow:hidden">Dance challenges have become a...</div>
<div class="t" style="left:1028px;top:706.61px;font-size:17px;line-height:17px;font-weight:400;color:#333;width:276px;overflow:hidden">TikTok dance challenges boost art...</div>
<div class="t" style="left:1317px;top:706.61px;font-size:17px;line-height:17px;font-weight:400;color:#333;">Viral</div>
<div style="position:absolute;left:1549px;top:701px;width:22px;height:22px;border:1px solid #a0a5aa;box-sizing:border-box;background:#fff"></div><svg style="position:absolute;left:1549px;top:701px" width="22" height="22" viewBox="0 0 22 22"><path d="M3.5 9.5 L8 14.5 L16 4" fill="none" stroke="#4f82c4" stroke-width="3"/></svg>
<svg style="position:absolute;left:1629px;top:707px" width="12" height="14" viewBox="0 0 12 14"><path d="M2.5 6 V4.2 A3.5 3.5 0 0 1 9.5 4.2 V6" fill="none" stroke="#3a3a3a" stroke-width="1.8"/><rect x="0.5" y="6" width="11" height="8" fill="#3a3a3a"/></svg>
<div class="t" style="left:1645px;width:260px;overflow:hidden;top:706.61px;font-size:17px;line-height:17px;color:#333;letter-spacing:0.45px">dance-challenges-and-digital-fame-tiktok</div>
<div class="t" style="left:225px;width:63px;text-align:center;top:741.61px;font-size:17px;line-height:17px;color:#333">11</div>
<div style="position:absolute;left:302px;top:742px;width:22px;height:22px;border:1px solid #a0a5aa;box-sizing:border-box;background:#fff"></div>
<svg style="position:absolute;left:344px;top:748px" width="12" height="14" viewBox="0 0 12 14"><path d="M2.5 6 V4.2 A3.5 3.5 0 0 1 9.5 4.2 V6" fill="none" stroke="#3a3a3a" stroke-width="1.8"/><rect x="0.5" y="6" width="11" height="8" fill="#3a3a3a"/></svg>
<div class="t" style="left:360px;top:747.61px;font-size:17px;line-height:17px;font-weight:400;color:#333;">36088</div>
<div class="t" style="left:437px;top:747.61px;font-size:17px;line-height:17px;font-weight:400;color:#333;width:237px;overflow:hidden">Cancel Culture vs. Accounta...</div>
<div style="position:absolute;left:683px;top:745px;width:43px;height:24px;background:#efefef;border:1px solid #767676;box-sizing:border-box"></div>
<svg style="position:absolute;left:690px;top:747px" width="30" height="22" viewBox="0 0 30 22"><path d="M14.5 4.6 H8.3 Q6.3 4.6 6.3 6.6 V14.6 Q6.3 16.6 8.3 16.6 H16.3 Q18.3 16.6 18.3 14.6 V12.6" fill="none" stroke="#3a3a3a" stroke-width="1.5"/><path d="M11.6 14.2 L12.3 11.4 L19.4 4.3 L21.5 6.4 L14.4 13.5Z" fill="#3a3a3a"/><path d="M12.4 12.2 L13.6 13.4" stroke="#efefef" stroke-width="1"/></svg><div class="t" style="left:733px;top:747.61px;font-size:17px;line-height:17px;font-weight:400;color:#333;width:284px;overflow:hidden">Cancel culture and accountabil...</div>
<div class="t" style="left:1028px;top:747.61px;font-size:17px;line-height:17px;font-weight:400;color:#333;width:276px;overflow:hidden">Cancel culture and accountability ...</div>
<div class="t" style="left:1317px;top:747.61px;font-size:17px;line-height:17px;font-weight:400;color:#333;">Accountability</div>
<div style="position:absolute;left:1549px;top:742px;width:22px;height:22px;border:1px solid #a0a5aa;box-sizing:border-box;background:#fff"></div><svg style="position:absolute;left:1549px;top:742px" width="22" height="22" viewBox="0 0 22 22"><path d="M3.5 9.5 L8 14.5 L16 4" fill="none" stroke="#4f82c4" stroke-width="3"/></svg>
<svg style="position:absolute;left:1629px;top:748px" width="12" height="14" viewBox="0 0 12 14"><path d="M2.5 6 V4.2 A3.5 3.5 0 0 1 9.5 4.2 V6" fill="none" stroke="#3a3a3a" stroke-width="1.8"/><rect x="0.5" y="6" width="11" height="8" fill="#3a3a3a"/></svg>
<div class="t" style="left:1645px;width:260px;overflow:hidden;top:747.61px;font-size:17px;line-height:17px;color:#333;letter-spacing:0.45px">cancel-culture-vs-accountability-what-is</div>
<div class="t" style="left:225px;width:63px;text-align:center;top:782.61px;font-size:17px;line-height:17px;color:#333">12</div>
<div style="position:absolute;left:302px;top:783px;width:22px;height:22px;border:1px solid #a0a5aa;box-sizing:border-box;background:#fff"></div>
<svg style="position:absolute;left:344px;top:789px" width="12" height="14" viewBox="0 0 12 14"><path d="M2.5 6 V4.2 A3.5 3.5 0 0 1 9.5 4.2 V6" fill="none" stroke="#3a3a3a" stroke-width="1.8"/><rect x="0.5" y="6" width="11" height="8" fill="#3a3a3a"/></svg>
<div class="t" style="left:360px;top:788.61px;font-size:17px;line-height:17px;font-weight:400;color:#333;">36087</div>
<div class="t" style="left:437px;top:788.61px;font-size:17px;line-height:17px;font-weight:400;color:#333;width:237px;overflow:hidden">Remakes, Reboots, and Revi...</div>
<div style="position:absolute;left:683px;top:786px;width:43px;height:24px;background:#efefef;border:1px solid #767676;box-sizing:border-box"></div>
<svg style="position:absolute;left:690px;top:788px" width="30" height="22" viewBox="0 0 30 22"><path d="M14.5 4.6 H8.3 Q6.3 4.6 6.3 6.6 V14.6 Q6.3 16.6 8.3 16.6 H16.3 Q18.3 16.6 18.3 14.6 V12.6" fill="none" stroke="#3a3a3a" stroke-width="1.5"/><path d="M11.6 14.2 L12.3 11.4 L19.4 4.3 L21.5 6.4 L14.4 13.5Z" fill="#3a3a3a"/><path d="M12.4 12.2 L13.6 13.4" stroke="#efefef" stroke-width="1"/></svg><div class="t" style="left:733px;top:788.61px;font-size:17px;line-height:17px;font-weight:400;color:#333;width:284px;overflow:hidden">In recent years, the entertain...</div>
<div class="t" style="left:1028px;top:788.61px;font-size:17px;line-height:17px;font-weight:400;color:#333;width:276px;overflow:hidden">The entertainment industry is incr...</div>
<div class="t" style="left:1317px;top:788.61px;font-size:17px;line-height:17px;font-weight:400;color:#333;">Nostalgia</div>
<div style="position:absolute;left:1549px;top:783px;width:22px;height:22px;border:1px solid #a0a5aa;box-sizing:border-box;background:#fff"></div><svg style="position:absolute;left:1549px;top:783px" width="22" height="22" viewBox="0 0 22 22"><path d="M3.5 9.5 L8 14.5 L16 4" fill="none" stroke="#4f82c4" stroke-width="3"/></svg>
<svg style="position:absolute;left:1629px;top:789px" width="12" height="14" viewBox="0 0 12 14"><path d="M2.5 6 V4.2 A3.5 3.5 0 0 1 9.5 4.2 V6" fill="none" stroke="#3a3a3a" stroke-width="1.8"/><rect x="0.5" y="6" width="11" height="8" fill="#3a3a3a"/></svg>
<div class="t" style="left:1645px;width:260px;overflow:hidden;top:788.61px;font-size:17px;line-height:17px;color:#333;letter-spacing:0.45px">remakes-reboots-and-revivals-are-here-to-stay</div>
<div class="t" style="left:225px;width:63px;text-align:center;top:823.61px;font-size:17px;line-height:17px;color:#333">13</div>
<div style="position:absolute;left:302px;top:824px;width:22px;height:22px;border:1px solid #a0a5aa;box-sizing:border-box;background:#fff"></div>
<svg style="position:absolute;left:344px;top:830px" width="12" height="14" viewBox="0 0 12 14"><path d="M2.5 6 V4.2 A3.5 3.5 0 0 1 9.5 4.2 V6" fill="none" stroke="#3a3a3a" stroke-width="1.8"/><rect x="0.5" y="6" width="11" height="8" fill="#3a3a3a"/></svg>
<div class="t" style="left:360px;top:829.61px;font-size:17px;line-height:17px;font-weight:400;color:#333;">36086</div>
<div class="t" style="left:437px;top:829.61px;font-size:17px;line-height:17px;font-weight:400;color:#333;width:237px;overflow:hidden">Global Pop Culture: How K-...</div>
<div style="position:absolute;left:683px;top:827px;width:43px;height:24px;background:#efefef;border:1px solid #767676;box-sizing:border-box"></div>
<svg style="position:absolute;left:690px;top:829px" width="30" height="22" viewBox="0 0 30 22"><path d="M14.5 4.6 H8.3 Q6.3 4.6 6.3 6.6 V14.6 Q6.3 16.6 8.3 16.6 H16.3 Q18.3 16.6 18.3 14.6 V12.6" fill="none" stroke="#3a3a3a" stroke-width="1.5"/><path d="M11.6 14.2 L12.3 11.4 L19.4 4.3 L21.5 6.4 L14.4 13.5Z" fill="#3a3a3a"/><path d="M12.4 12.2 L13.6 13.4" stroke="#efefef" stroke-width="1"/></svg><div class="t" style="left:733px;top:829.61px;font-size:17px;line-height:17px;font-weight:400;color:#333;width:284px;overflow:hidden">In recent years, K-Pop and Lat...</div>
<div class="t" style="left:1028px;top:829.61px;font-size:17px;line-height:17px;font-weight:400;color:#333;width:276px;overflow:hidden">K-Pop and Latin music have surge...</div>
<div class="t" style="left:1317px;top:829.61px;font-size:17px;line-height:17px;font-weight:400;color:#333;">Fusion</div>
<div style="position:absolute;left:1549px;top:824px;width:22px;height:22px;border:1px solid #a0a5aa;box-sizing:border-box;background:#fff"></div><svg style="position:absolute;left:1549px;top:824px" width="22" height="22" viewBox="0 0 22 22"><path d="M3.5 9.5 L8 14.5 L16 4" fill="none" stroke="#4f82c4" stroke-width="3"/></svg>
<svg style="position:absolute;left:1629px;top:830px" width="12" height="14" viewBox="0 0 12 14"><path d="M2.5 6 V4.2 A3.5 3.5 0 0 1 9.5 4.2 V6" fill="none" stroke="#3a3a3a" stroke-width="1.8"/><rect x="0.5" y="6" width="11" height="8" fill="#3a3a3a"/></svg>
<div class="t" style="left:1645px;width:260px;overflow:hidden;top:829.61px;font-size:17px;line-height:17px;color:#333;letter-spacing:0.45px">global-pop-culture-how-k-pop-and-latin</div>
<div class="t" style="left:225px;width:63px;text-align:center;top:864.61px;font-size:17px;line-height:17px;color:#333">14</div>
<div style="position:absolute;left:302px;top:865px;width:22px;height:22px;border:1px solid #a0a5aa;box-sizing:border-box;background:#fff"></div>
<svg style="position:absolute;left:344px;top:871px" width="12" height="14" viewBox="0 0 12 14"><path d="M2.5 6 V4.2 A3.5 3.5 0 0 1 9.5 4.2 V6" fill="none" stroke="#3a3a3a" stroke-width="1.8"/><rect x="0.5" y="6" width="11" height="8" fill="#3a3a3a"/></svg>
<div class="t" style="left:360px;top:870.61px;font-size:17px;line-height:17px;font-weight:400;color:#333;">36085</div>
<div class="t" style="left:437px;top:870.61px;font-size:17px;line-height:17px;font-weight:400;color:#333;width:237px;overflow:hidden">Gaming Is the New Hollywo...</div>
<div style="position:absolute;left:683px;top:868px;width:43px;height:24px;background:#efefef;border:1px solid #767676;box-sizing:border-box"></div>
<svg style="position:absolute;left:690px;top:870px" width="30" height="22" viewBox="0 0 30 22"><path d="M14.5 4.6 H8.3 Q6.3 4.6 6.3 6.6 V14.6 Q6.3 16.6 8.3 16.6 H16.3 Q18.3 16.6 18.3 14.6 V12.6" fill="none" stroke="#3a3a3a" stroke-width="1.5"/><path d="M11.6 14.2 L12.3 11.4 L19.4 4.3 L21.5 6.4 L14.4 13.5Z" fill="#3a3a3a"/><path d="M12.4 12.2 L13.6 13.4" stroke="#efefef" stroke-width="1"/></svg><div class="t" style="left:733px;top:870.61px;font-size:17px;line-height:17px;font-weight:400;color:#333;width:284px;overflow:hidden">The rise of gaming as a domina...</div>
<div class="t" style="left:1028px;top:870.61px;font-size:17px;line-height:17px;font-weight:400;color:#333;width:276px;overflow:hidden">Gaming has evolved into a domin...</div>
<div class="t" style="left:1317px;top:870.61px;font-size:17px;line-height:17px;font-weight:400;color:#333;">Narrative</div>
<div style="position:absolute;left:1549px;top:865px;width:22px;height:22px;border:1px solid #a0a5aa;box-sizing:border-box;background:#fff"></div><svg style="position:absolute;left:1549px;top:865px" width="22" height="22" viewBox="0 0 22 22"><path d="M3.5 9.5 L8 14.5 L16 4" fill="none" stroke="#4f82c4" stroke-width="3"/></svg>
<svg style="position:absolute;left:1629px;top:871px" width="12" height="14" viewBox="0 0 12 14"><path d="M2.5 6 V4.2 A3.5 3.5 0 0 1 9.5 4.2 V6" fill="none" stroke="#3a3a3a" stroke-width="1.8"/><rect x="0.5" y="6" width="11" height="8" fill="#3a3a3a"/></svg>
<div class="t" style="left:1645px;width:260px;overflow:hidden;top:870.61px;font-size:17px;line-height:17px;color:#333;letter-spacing:0.45px">gaming-is-the-new-hollywood-the-rise</div>

</body></html>
